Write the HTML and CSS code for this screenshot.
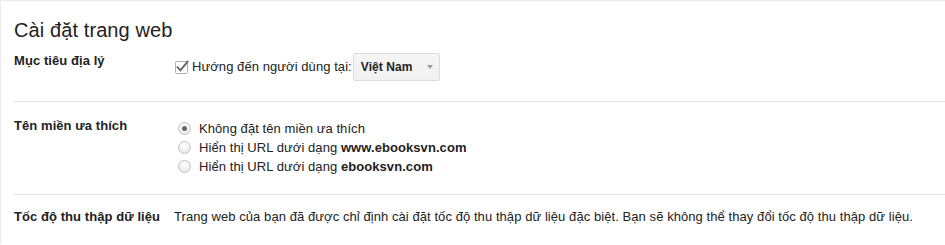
FILE: index.html
```html
<!DOCTYPE html>
<html lang="vi">
<head>
<meta charset="utf-8">
<title>Cài đặt trang web</title>
<link rel="stylesheet" href="styles.css">
</head>
<body>
<div class="page">
  <h1 class="title">Cài đặt trang web</h1>

  <section class="row row-geo">
    <div class="label">Mục tiêu địa lý</div>
    <div class="control geo">
      <span class="checkbox">
        <svg width="15" height="15" viewBox="0 0 15 15" aria-hidden="true">
          <rect x="0.5" y="1.5" width="12" height="12" rx="1" fill="#fff" stroke="#b0b0b0"/>
          <path d="M2.6 7.4 L5.4 10.4 L12.6 1.6" fill="none" stroke="#666" stroke-width="1.9" stroke-linecap="square"/>
        </svg>
      </span>
      <span class="geo-text">Hướng đến người dùng tại:</span>
      <div class="select">
        <span class="select-value">Việt Nam</span>
        <span class="arrow"></span>
      </div>
    </div>
  </section>

  <section class="row row-domain">
    <div class="label">Tên miền ưa thích</div>
    <div class="control options">
      <div class="option"><span class="radio checked"></span><span>Không đặt tên miền ưa thích</span></div>
      <div class="option"><span class="radio"></span><span>Hiển thị URL dưới dạng <b>www.ebooksvn.com</b></span></div>
      <div class="option"><span class="radio"></span><span>Hiển thị URL dưới dạng <b>ebooksvn.com</b></span></div>
    </div>
  </section>

  <section class="row row-crawl">
    <div class="label">Tốc độ thu thập dữ liệu</div>
    <div class="control crawl">Trang web của bạn đã được chỉ định cài đặt tốc độ thu thập dữ liệu đặc biệt. Bạn sẽ không thể thay đổi tốc độ thu thập dữ liệu.</div>
  </section>
</div>
</body>
</html>
```

FILE: styles.css
```css
html, body {
  margin: 0;
  padding: 0;
  background: #fff;
}

body {
  font-family: "Liberation Sans", Arial, sans-serif;
  font-size: 13px;
  color: #222;
  letter-spacing: 0.07px;
}

.page {
  border-top: 1px solid #ebebeb;
  border-left: 1px solid #ebebeb;
  padding: 17px 0 0 13px;
  min-height: 244px;
  box-sizing: border-box;
}

.title {
  margin: 0;
  font-size: 20px;
  line-height: 24px;
  font-weight: normal;
  color: #222;
  letter-spacing: 0.1px;
}

.row {
  display: grid;
  grid-template-columns: 160px 1fr;
  line-height: 16px;
}

.label {
  font-weight: bold;
  color: #222;
}

.row-geo {
  padding: 11px 0 20px;
}

.geo {
  display: flex;
  align-items: center;
  height: 28px;
}

.checkbox {
  display: inline-flex;
  width: 15px;
  height: 15px;
  margin: 0 2px 0 1px;
}

.checkbox svg {
  display: block;
  overflow: visible;
}

.geo-text {
  margin-right: 1px;
}

.select {
  display: flex;
  align-items: center;
  box-sizing: border-box;
  width: 87px;
  height: 28px;
  padding: 0 0 0 7px;
  border: 1px solid #dcdcdc;
  border-radius: 2px;
  background: linear-gradient(#f5f5f5, #f1f1f1);
}

.select-value {
  font-weight: bold;
  font-size: 12px;
  color: #222;
}

.arrow {
  margin-left: auto;
  margin-right: 6px;
  width: 0;
  height: 0;
  border-left: 3.5px solid transparent;
  border-right: 3.5px solid transparent;
  border-top: 4px solid #999;
}

.row-domain {
  border-top: 1px solid #e5e5e5;
  padding: 16px 0 18px;
}

.options {
  margin-top: 1px;
}

.option {
  display: flex;
  align-items: center;
  line-height: 19px;
}

.option b {
  font-weight: bold;
}

.radio {
  box-sizing: border-box;
  width: 13px;
  height: 13px;
  margin: 0 8px 0 4px;
  border-radius: 50%;
  border: 1px solid #c4c4c4;
  background: radial-gradient(circle at 50% 35%, #ffffff 0%, #f0f0f0 55%, #dedede 100%);
  position: relative;
}

.radio.checked::after {
  content: "";
  position: absolute;
  left: 50%;
  top: 50%;
  width: 5px;
  height: 5px;
  margin: -2.5px 0 0 -2.5px;
  border-radius: 50%;
  background: #666;
}

.row-crawl {
  border-top: 1px solid #e5e5e5;
  padding: 14px 0 0;
}

.crawl {
  color: #222;
}
```
